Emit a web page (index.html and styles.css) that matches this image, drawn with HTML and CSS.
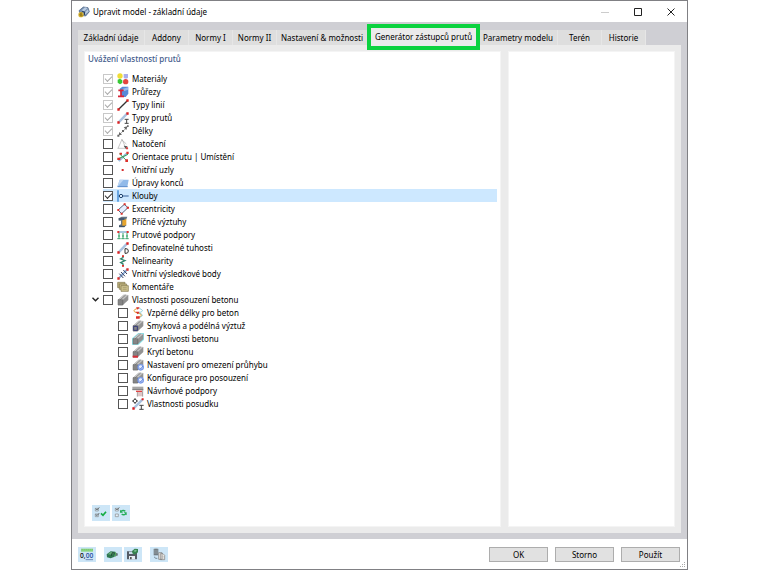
FILE: index.html
```html
<!DOCTYPE html>
<html lang="cs">
<head>
<meta charset="utf-8">
<title>Upravit model - základní údaje</title>
<link rel="stylesheet" href="styles.css">
</head>
<body>
<svg class="defs" aria-hidden="true">
  <symbol id="beam" viewBox="0 0 36 36"><path d="M3 17 20 2l14 1v15L17 34H3z" fill="#929292"/><path d="M3 17 20 2l14 1-17 15z" fill="#c4c4c4"/><path d="M9 18 26 3M17 19v14" stroke="#666" stroke-width="2"/><path d="M3 17h14v16H3z" fill="#858585" stroke="#666" stroke-width="1.5"/></symbol>
  <symbol id="gear-beam" viewBox="0 0 36 36"><use href="#beam"/><circle cx="26" cy="25" r="8" fill="#e6efff" stroke="#7c9be6" stroke-width="4"/><path d="m22 26 4 4 7-9" fill="none" stroke="#5c80dd" stroke-width="3"/></symbol>
</svg>
<main class="window">
  <header class="titlebar">
    <svg class="app-icon" viewBox="0 0 36 36"><path d="m3 14 13-11 14 2 4 12-11 13-14-2z" fill="#7790b0" stroke="#3c5678" stroke-width="2"/><path d="m11 13 10-9 8 2-10 10zM20 26l2-9 8-7 2 7z" fill="#b9cbe2"/><path d="m12 17 8 1-1 9" fill="none" stroke="#263b58" stroke-width="3"/><circle cx="9" cy="26" r="8" fill="#d6b232"/><path d="M12 21c-8 0-8 9-3 9 6 0 5-6-2-4" fill="none" stroke="#6b5610" stroke-width="2"/></svg>
    <h1>Upravit model - základní údaje</h1>
    <button class="win-btn off" aria-label="Minimalizovat" disabled><svg viewBox="0 0 8 8"><path d="M0 4.5h8"/></svg></button>
    <button class="win-btn" aria-label="Maximalizovat"><svg viewBox="0 0 8 8"><path d="M.5.5h7v7h-7z"/></svg></button>
    <button class="win-btn" aria-label="Zavřít"><svg viewBox="0 0 8 8"><path d="m.5.5 7 7m0-7-7 7"/></svg></button>
  </header>
  <section class="body">
    <nav class="tabs" role="tablist">
      <button role="tab">Základní údaje</button>
      <button role="tab" class="narrow">Addony</button>
      <button role="tab" class="narrow">Normy I</button>
      <button role="tab" class="narrow">Normy II</button>
      <button role="tab" class="wide">Nastavení &amp; možnosti</button>
      <button role="tab" class="active" aria-selected="true">Generátor zástupců prutů</button>
      <button role="tab" class="params">Parametry modelu</button>
      <button role="tab" class="narrow">Terén</button>
      <button role="tab" class="narrow">Historie</button>
    </nav>
    <div class="page">
      <section class="panel options">
        <h2>Uvážení vlastností prutů</h2>
        <ul class="tree">
          <li><label class="row"><input type="checkbox" checked disabled><svg class="icon" viewBox="0 0 36 36"><circle cx="9" cy="9" r="8" fill="#f0dc37"/><path d="M20 3h13v11q-6 5-13 0z" fill="#a9adec"/><path d="m2 20 7-3 7 5v8l-7 4-7-5z" fill="#38c936"/><circle cx="26" cy="26" r="8" fill="#e4453f"/></svg>Materiály</label></li>
          <li><label class="row"><input type="checkbox" checked disabled><svg class="icon" viewBox="0 0 36 36"><path d="m8 8 8-6h18v21l-8 10H14z" fill="#5689d8"/><path d="m16 9 17-5v7l-13 5z" fill="#95b8ed"/><path d="M4 13h16M12 13v17M3 31h18" stroke="#d62538" stroke-width="5"/></svg>Průřezy</label></li>
          <li><label class="row"><input type="checkbox" checked disabled><svg class="icon" viewBox="0 0 36 36"><path d="M5 31 31 5" stroke="#333" stroke-width="4"/><path d="M1 28h7v7H1zM28 1h7v7h-7z" fill="#dc2020"/></svg>Typy linií</label></li>
          <li><label class="row"><input type="checkbox" checked disabled><svg class="icon" viewBox="0 0 36 36"><path d="M5 31 31 4" stroke="#a9c2df" stroke-width="7"/><path d="M1 28h7v7H1zM28 1h7v7h-7z" fill="#dc2020"/><path d="M23 22h12M29 22v12M23 34h12" stroke="#444" stroke-width="3"/></svg>Typy prutů</label></li>
          <li><label class="row"><input type="checkbox" checked disabled><svg class="icon" viewBox="0 0 36 36"><path d="M5 31 31 6" stroke="#777" stroke-width="2"/><path d="m5 31 2-10 8 8zM31 4l-3 11-8-8z" fill="#666"/><path d="M1 29h6v6H1zM30 1h5v5h-5zM15 15h6v6h-6z" fill="#666"/></svg>Délky</label></li>
          <li><label class="row"><input type="checkbox"><svg class="icon" viewBox="0 0 36 36"><path d="M3 31 15 4l11 25M2 31h32M14 5l14 13" fill="none" stroke="#aaa" stroke-width="2"/><path d="m20 23 12 2-6 7z" fill="#555"/><path d="M27 28h6v6h-6z" fill="#d94343"/></svg>Natočení</label></li>
          <li><label class="row"><input type="checkbox"><svg class="icon" viewBox="0 0 36 36"><path d="M5 30 29 8" stroke="#a1bee0" stroke-width="7"/><path d="m7 8 21 20M2 24l31-14" stroke="#39a257" stroke-width="3"/><path d="M28 2h7v7h-7zM1 20h9v7H1zM25 25h8v8h-8zM8 5h7v6H8z" fill="#dc302b"/></svg>Orientace prutu | Umístění</label></li>
          <li><label class="row"><input type="checkbox"><svg class="icon" viewBox="0 0 36 36"><path d="M14 15h6v6h-6z" fill="#d52c2c"/></svg>Vnitřní uzly</label></li>
          <li><label class="row"><input type="checkbox"><svg class="icon" viewBox="0 0 36 36"><path d="M8 8h27l-4 22H1z" fill="#91bae9"/><path d="M1 30 8 8h12z" fill="#bed7f4"/><path d="M2 29h30" stroke="#5e8fcc" stroke-width="3"/></svg>Úpravy konců</label></li>
          <li><label class="row selected"><input type="checkbox" checked><svg class="icon" viewBox="0 0 36 36"><path d="M3 1v34" stroke="#5499dd" stroke-width="5"/><path d="M5 18h30" stroke="#345f98" stroke-width="3"/><circle cx="12" cy="18" r="5" fill="#d9edff" stroke="#24466e" stroke-width="3"/></svg>Klouby</label></li>
          <li><label class="row"><input type="checkbox"><svg class="icon" viewBox="0 0 36 36"><path d="m3 21 19-17 11 10-19 18z" fill="#e5efff" stroke="#56657b" stroke-width="3"/><path d="M20 1h6v6h-6zM29 11h7v6h-7zM1 18h6v6H1zM11 29h6v6h-6z" fill="#dc302b"/></svg>Excentricity</label></li>
          <li><label class="row"><input type="checkbox"><svg class="icon" viewBox="0 0 36 36"><path d="m5 7 9-5h17l-3 8-6 5v10l7 2-7 7H6v-6l6-3V14H5z" fill="#667583"/><path d="m16 13 12-4v17l-8 5h-4z" fill="#e5a52e"/><path d="M5 9h17M6 31h17" stroke="#3e5269" stroke-width="4"/></svg>Příčné výztuhy</label></li>
          <li><label class="row"><input type="checkbox"><svg class="icon" viewBox="0 0 36 36"><path d="M3 9h31" stroke="#a9c7df" stroke-width="6"/><path d="M6 12v16M18 12v16M30 12v16M1 29h10M13 29h10M25 29h10M3 21h6M15 21h6M27 21h6" stroke="#37a26a" stroke-width="3"/><path d="M1 6h6v6H1zM29 6h6v6h-6z" fill="#df3232"/></svg>Prutové podpory</label></li>
          <li><label class="row"><input type="checkbox"><svg class="icon" viewBox="0 0 36 36"><path d="M5 31 30 5" stroke="#a9c2df" stroke-width="7"/><path d="M1 28h7v7H1zM28 1h7v7h-7z" fill="#dc2020"/><path d="M24 20h3q7 0 7 7t-7 7h-3z" fill="white" stroke="#333" stroke-width="3"/></svg>Definovatelné tuhosti</label></li>
          <li><label class="row"><input type="checkbox"><svg class="icon" viewBox="0 0 36 36"><path d="M18 2v6l-7 4 13 5-13 6 7 4v7" fill="none" stroke="#34866e" stroke-width="4"/><path d="M15 1h6v5h-6zM15 30h6v5h-6z" fill="#dc302b"/></svg>Nelinearity</label></li>
          <li><label class="row"><input type="checkbox"><svg class="icon" viewBox="0 0 36 36"><path d="M5 31 31 4" stroke="#8badd6" stroke-width="6"/><path d="m7 17 12 13M12 12l12 13M19 6l11 12" stroke="#343c60" stroke-width="3"/><path d="M1 28h7v7H1zM28 1h7v7h-7z" fill="#dc302b"/></svg>Vnitřní výsledkové body</label></li>
          <li><label class="row"><input type="checkbox"><svg class="icon" viewBox="0 0 36 36"><path d="M2 4h22v16H2z" fill="#baad79" stroke="#81764b" stroke-width="2"/><path d="M7 9h22v16H7z" fill="#c8bb87" stroke="#81764b" stroke-width="2"/><path d="M12 14h22v17H12z" fill="#cfc491" stroke="#81764b" stroke-width="2"/><path d="M17 20h12M17 25h12" stroke="#9c9064" stroke-width="2"/></svg>Komentáře</label></li>
          <li class="branch">
            <button class="expander" aria-label="Sbalit" aria-expanded="true"><svg viewBox="0 0 7 5"><path d="m.5.7 3 3 3-3"/></svg></button>
            <label class="row"><input type="checkbox"><svg class="icon"><use href="#beam"/></svg>Vlastnosti posouzení betonu</label>
            <ul class="subtree">
              <li><label class="row"><input type="checkbox"><svg class="icon" viewBox="0 0 36 36"><path d="M17 3c19 5 19 11 0 15 19 3 19 10 0 15" fill="none" stroke="#8fd3e2" stroke-width="3"/><path d="M17 4c-15 5-15 10 0 14s15 9 0 13" fill="none" stroke="#e69c32" stroke-width="3"/><path d="M12 1h11l-6 7zM11 14h12l-6 8zM12 28h11v7H12z" fill="#dc302b"/></svg>Vzpěrné délky pro beton</label></li>
              <li><label class="row"><input type="checkbox"><svg class="icon" viewBox="0 0 36 36"><use href="#beam"/><path d="M5 19h11v12H5z" fill="none" stroke="#373d7c" stroke-width="3"/></svg>Smyková a podélná výztuž</label></li>
              <li><label class="row"><input type="checkbox"><svg class="icon" viewBox="0 0 36 36"><path d="M0 16 19 0h17v20L19 36H0z" fill="#8fe2e8"/><use href="#beam"/></svg>Trvanlivosti betonu</label></li>
              <li><label class="row"><input type="checkbox"><svg class="icon" viewBox="0 0 36 36"><use href="#beam"/><path d="M2 32h16" stroke="#d72d35" stroke-width="6"/></svg>Krytí betonu</label></li>
              <li><label class="row"><input type="checkbox"><svg class="icon"><use href="#gear-beam"/></svg>Nastavení pro omezení průhybu</label></li>
              <li><label class="row"><input type="checkbox"><svg class="icon"><use href="#gear-beam"/></svg>Konfigurace pro posouzení</label></li>
              <li><label class="row"><input type="checkbox"><svg class="icon" viewBox="0 0 36 36"><path d="M1 5h33v9H1z" fill="#a5a5a5"/><path d="M1 14h33" stroke="#777" stroke-width="3"/><path d="M16 20h17v14H16z" fill="#dfc5c5"/><path d="M16 20v15M32 15v20" stroke="#888" stroke-width="2"/><path d="M12 19h18" stroke="#df4545" stroke-width="4"/></svg>Návrhové podpory</label></li>
              <li><label class="row"><input type="checkbox"><svg class="icon" viewBox="0 0 36 36"><path d="M5 31 31 5" stroke="#a9c2df" stroke-width="7"/><path d="M1 28h7v7H1zM29 1h6v6h-6z" fill="#dc2020"/><circle cx="9" cy="9" r="5" fill="white" stroke="#555" stroke-width="3"/><path d="M9 0v4M9 14v4M0 9h4M14 9h4M22 22h13M28 22v12M22 34h13" stroke="#444" stroke-width="3"/></svg>Vlastnosti posudku</label></li>
            </ul>
          </li>
        </ul>
        <div class="tools">
          <button aria-label="Vybrat vše"><svg viewBox="0 0 54 48"><g fill="none" stroke="#888" stroke-width="2"><path d="M10 10h9v8h-9zM10 27h9v8h-9z"/><path d="m11 11 4 4 7-8M11 28l4 4 7-8" stroke="#444"/></g><path d="m27 25 6 6 9-11" fill="none" stroke="#16ad43" stroke-width="5"/></svg></button>
          <button aria-label="Obrátit výběr"><svg viewBox="0 0 54 48"><path d="M10 10h9v8h-9zM10 27h9v8h-9z" fill="#e4f2fc" stroke="#888" stroke-width="2"/><path d="m11 11 4 4 7-8" fill="none" stroke="#444" stroke-width="2"/><path d="M27 19q7-5 13 0M42 26q-7 6-13 1" fill="none" stroke="#24ad58" stroke-width="4"/><path d="m24 14v9h9zM44 31v-9h-9z" fill="#24ad58"/></svg></button>
        </div>
      </section>
      <section class="panel preview" aria-label="Náhled"></section>
    </div>
  </section>
  <footer class="footer">
    <div class="tools">
      <button aria-label="Jednotky a desetinná místa"><svg viewBox="0 0 54 45"><path d="M9 5h36v9H9z" fill="#8bd581"/><path d="M13 6v4M19 6v4M25 6v4M31 6v4M37 6v4M43 6v4" stroke="#5aaa59"/><text x="6" y="34">0,<tspan class="blue">00</tspan></text><path d="M23 38h22" stroke="#405a9b" stroke-width="2"/></svg></button>
      <button class="spaced" aria-label="Načíst výchozí"><svg viewBox="0 0 54 45"><path d="m8 22 12-9 14 1-2 15-12 5-11-3z" fill="#2e7750"/><path d="m11 22 9-7 13 1-9 7z" fill="#66ad7b"/><path d="m22 26 3-9 7 1" fill="none" stroke="#193e31" stroke-width="3"/><path d="M33 19v-5l8 8-8 8v-6z" fill="#55a65c"/><path d="M36 19h5v7h-5z" fill="#66727a"/></svg></button>
      <button aria-label="Uložit jako výchozí"><svg viewBox="0 0 54 45"><path d="M9 13h26l4 5v19H9z" fill="#555c66"/><path d="M15 14h14v7H15z" fill="#c9dce9"/><path d="M15 27h18v10H15z" fill="#e6eef4"/><path d="M18 30h5v7h-5z" fill="#555"/><path d="m24 12 8-7 10 1v10l-10 7-7-4z" fill="#35824e"/><path d="m29 11 6-3 4 3-6 4z" fill="#7bc091"/></svg></button>
      <button class="spaced" aria-label="Kopírovat"><svg viewBox="0 0 54 45"><path d="M11 6h14v19H11z" fill="#727c83"/><path d="M11 6q7-4 14 0M12 12h12M12 18h12" fill="none" stroke="#a4afb4" stroke-width="2"/><path d="M14 29v3q3 3 8 2" fill="none" stroke="#52616b" stroke-width="2"/><path d="M26 17h10v20H26zM31 20h8l5 5v13H31z" fill="#f0eeea" stroke="#777" stroke-width="2"/><path d="M34 28h7M34 33h7" stroke="#aaa" stroke-width="2"/></svg></button>
    </div>
    <div class="actions">
      <button>OK</button>
      <button>Storno</button>
      <button>Použít</button>
    </div>
    <svg class="grip" viewBox="0 0 6 6" aria-hidden="true"><path d="M4 0h1v1H4zM2 2h1v1H2zM4 2h1v1H4zM0 4h1v1H0zM2 4h1v1H2zM4 4h1v1H4z"/></svg>
  </footer>
</main>
</body>
</html>
```
FILE: styles.css
```css
* { box-sizing: border-box; }

body {
  margin: 0;
  background: #fff;
  color: #000;
  font: 8px/13px "Noto Sans", "Open Sans", sans-serif;
}

button {
  padding: 0;
  border: 0;
  background: none;
  color: inherit;
  font: inherit;
}

svg { display: block; flex: none; }

.defs { position: absolute; width: 0; height: 0; }

.window {
  display: flex;
  flex-direction: column;
  min-height: 100vh;
  margin: 0 72px 0 71px;
  border: 1px solid #808084;
  background: #fff;
}

.titlebar {
  display: flex;
  align-items: center;
  height: 21px;
  padding-left: 6px;
}

.app-icon { width: 12px; height: 12px; }

h1 {
  flex: 1;
  margin: 0 0 0 3px;
  font-size: 8px;
  font-weight: 400;
}

.win-btn {
  display: grid;
  place-items: center;
  width: 33px;
  height: 21px;
}

.win-btn svg {
  width: 8px;
  height: 8px;
  fill: none;
  stroke: #222;
}

.win-btn.off svg { stroke: #ccc; }

.body {
  flex: 1;
  display: flex;
  flex-direction: column;
  padding: 8px 6px 6px;
  background: #cfcfd4;
}

.tabs { display: flex; height: 15px; }

.tabs button {
  width: 67px;
  border-right: 1px solid #e6e6e6;
  background: #dedede;
  line-height: 15px;
  white-space: nowrap;
}

.tabs .narrow { width: 44px; }
.tabs .wide { width: 91px; }
.tabs .params { width: 79px; }

.tabs .active {
  width: 113px;
  height: 26px;
  margin: -6px -1px 0;
  padding-bottom: 1px;
  border: 4px solid #0bd23f;
  background: #ebebeb;
  position: relative;
  z-index: 1;
}

.page {
  flex: 1;
  display: grid;
  grid-template-columns: 5fr 2fr;
  gap: 7px;
  padding: 6px;
  background: #ebebeb;
}

.panel { background: #fff; border: 1px solid #f4f4f4; }

.options {
  display: flex;
  flex-direction: column;
  padding: 0 3px 5px;
}

h2 {
  margin: 0 0 7px;
  color: #3f5b8b;
  font-size: 8px;
  font-weight: 500;
}

ul { margin: 0; padding: 0; list-style: none; }

.tree { padding-left: 15px; }
.subtree { padding-left: 15px; }
.branch { position: relative; }

.row {
  display: flex;
  align-items: center;
  height: 13px;
}

.selected { background: #cde8ff; }

.row input {
  appearance: none;
  flex: none;
  width: 10px;
  height: 10px;
  margin: 0 4px 0 0;
  border: 1px solid #555;
  background: #fff;
}

.row input:disabled { border-color: #c8c8c8; }

.row input:checked::before {
  content: "";
  display: block;
  width: 6px;
  height: 3px;
  margin: 1px;
  border: solid #333;
  border-width: 0 0 1px 1px;
  transform: rotate(-45deg);
}

.row input:disabled::before { border-color: #aaa; }

.icon { width: 12px; height: 12px; margin-right: 3px; }

.expander {
  position: absolute;
  left: -11px;
  top: 4px;
}

.expander svg {
  width: 7px;
  height: 5px;
  fill: none;
  stroke: #222;
  stroke-width: 1.4;
}

.tools { display: flex; gap: 2px; }

.options .tools { margin-top: auto; padding-left: 4px; }

.tools button { background: #cde6f7; }

.options .tools svg { width: 18px; height: 16px; }

.footer {
  display: flex;
  align-items: center;
  justify-content: space-between;
  height: 30px;
  padding: 0 7px 0 6px;
  position: relative;
}

.footer .tools svg { width: 18px; height: 15px; }
.footer .spaced { margin-left: 6px; }

.tools text {
  fill: #111;
  font: 600 20px "Open Sans", sans-serif;
}

.tools .blue { fill: #2850a0; }

.actions { display: flex; gap: 7px; }

.actions button {
  width: 59px;
  height: 15px;
  border: 1px solid #adadad;
  background: #e1e1e1;
}

.grip {
  position: absolute;
  right: 1px;
  bottom: 1px;
  width: 6px;
  height: 6px;
  fill: #aaa;
}
```
